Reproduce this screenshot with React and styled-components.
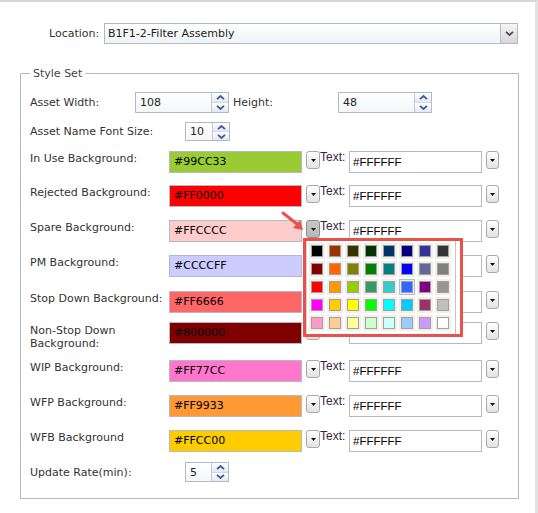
import React from 'react';
import styled, { createGlobalStyle } from 'styled-components';

const Global = createGlobalStyle`
  html, body { margin: 0; padding: 0; background: #fff; }
  body { font-family: "DejaVu Sans", Tahoma, sans-serif; font-size: 11px; color: #333; }
  * { box-sizing: border-box; }
`;

const Frame = styled.div`
  position: relative;
  width: 538px;
  height: 513px;
  border-top: 2px solid #d6d6d6;
  border-right: 3px solid #e2e2e2;
  overflow: hidden;
  background: #fff;
`;

const LocationRow = styled.div`
  display: flex;
  align-items: center;
  margin: 21px 0 0 49px;
  gap: 5px;
`;

const LocLabel = styled.span`
  width: 50px;
  white-space: nowrap;
  color: #333;
`;

const Select = styled.div`
  display: flex;
  width: 414px;
  height: 21px;
  border: 1px solid #b5b8c8;
  background: linear-gradient(#ffffff, #eef3f3);
`;

const SelectText = styled.div`
  flex: 1;
  padding-left: 3px;
  line-height: 19px;
  color: #222;
`;

const SelectButton = styled.div`
  width: 17px;
  border-left: 1px solid #b5b8c8;
  background: linear-gradient(#f6f6f6, #d6d6d6);
  display: flex;
  align-items: center;
  justify-content: center;
`;

const Group = styled.fieldset`
  margin: 23px 0 0 20px;
  width: 499px;
  height: 432px;
  border: 1px solid #b5b8c8;
  padding: 12px 9px 0 9px;
  display: flex;
  flex-direction: column;
`;

const Legend = styled.legend`
  padding: 0 3px;
  color: #444;
  line-height: 13px;
`;

const Row = styled.div`
  display: flex;
  align-items: flex-start;
  height: ${p => p.$h}px;
  flex-shrink: 0;
`;

const SpinLine = styled.div`
  display: flex;
  align-items: center;
`;

const Label = styled.div`
  width: ${p => p.$w}px;
  flex-shrink: 0;
  color: #333;
  line-height: 13px;
  padding-top: ${p => p.$pt || 0}px;
`;

const Spinner = styled.div`
  display: flex;
  width: ${p => p.$w}px;
  height: ${p => p.$h}px;
  border: 1px solid #b5b8c8;
  background: linear-gradient(#ffffff, #f4f6f8);
`;

const SpinValue = styled.div`
  flex: 1;
  padding-left: 4px;
  display: flex;
  align-items: center;
  color: #222;
`;

const SpinButtons = styled.div`
  width: 17px;
  border-left: 1px solid #c4c8d4;
  display: flex;
  flex-direction: column;
`;

const SpinHalf = styled.div`
  flex: 1;
  display: flex;
  align-items: center;
  justify-content: center;
  background: linear-gradient(#ffffff, #e4e8ee);
  & + & { border-top: 1px solid #d4d8e0; }
`;

const ColorField = styled.div`
  width: 133px;
  height: 22px;
  border: 1px solid #b5b8c8;
  background: ${p => p.$bg};
  padding-left: 4px;
  line-height: 20px;
  color: #000;
  flex-shrink: 0;
`;

const DropBtn = styled.div`
  width: ${p => p.$w}px;
  height: 18px;
  margin-left: 4px;
  flex-shrink: 0;
  border: 1px solid ${p => (p.$pressed ? '#8c8c8c' : '#a9a9a9')};
  border-radius: 3px;
  background: ${p => (p.$pressed ? 'linear-gradient(#c6c6c6, #b8b8b8)' : 'linear-gradient(#ffffff, #e2e2e2)')};
  display: flex;
  align-items: center;
  justify-content: center;
`;

const TextLabel = styled.div`
  width: 27px;
  margin-right: 2px;
  font-family: "Liberation Sans", Arial, sans-serif;
  font-size: 12px;
  line-height: 13px;
  color: #3c1f44;
  flex-shrink: 0;
`;

const TextInput = styled.div`
  width: 133px;
  height: 22px;
  border: 1px solid #b5b8c8;
  background: #fff;
  padding-left: 3px;
  line-height: 21px;
  font-family: "Liberation Sans", Arial, sans-serif;
  font-size: 11.5px;
  color: #000;
  flex-shrink: 0;
`;

const Annot = styled.div`
  position: absolute;
  left: 303px;
  top: 236px;
  width: 160px;
  height: 99px;
  border: 3px solid #e8524a;
  background: #fff;
`;

const Palette = styled.div`
  width: 150px;
  height: 93px;
  border-left: 1px solid #d4d4d4;
  border-right: 1px solid #c4c4c4;
  padding: 2px 4px 0 2px;
  display: grid;
  grid-template-columns: repeat(8, 16px);
  grid-auto-rows: 16px;
  gap: 2px;
  background: #fff;
`;

const Cell = styled.div`
  display: flex;
  align-items: center;
  justify-content: center;
  background: ${p => (p.$sel ? '#e2ecfa' : '#efefef')};
  border: 1px solid ${p => (p.$sel ? '#9ec0ec' : 'transparent')};
`;

const Swatch = styled.div`
  width: 12px;
  height: 12px;
  border: 1px solid #a7a091;
  background: ${p => p.$c};
`;

const Arrow = styled.svg`
  position: absolute;
  left: 280px;
  top: 207px;
`;

const Chevron = ({ up, color = '#3a5ba0' }) => (
  <svg width="9" height="5" viewBox="0 0 9 5">
    <path d={up ? 'M1 4.2 L4.5 1 L8 4.2' : 'M1 0.8 L4.5 4 L8 0.8'} fill="none" stroke={color} strokeWidth="1.8" />
  </svg>
);

const Tri = () => (
  <svg width="5" height="3" viewBox="0 0 5 3">
    <polygon points="0,0 5,0 2.5,3" fill="#111" />
  </svg>
);

const Spin = ({ value, w, h }) => (
  <Spinner $w={w} $h={h}>
    <SpinValue>{value}</SpinValue>
    <SpinButtons>
      <SpinHalf><Chevron up /></SpinHalf>
      <SpinHalf><Chevron /></SpinHalf>
    </SpinButtons>
  </Spinner>
);

const rows = [
  { label: 'In Use Background:', color: '#99CC33', h: 34 },
  { label: 'Rejected Background:', color: '#FF0000', h: 35 },
  { label: 'Spare Background:', color: '#FFCCCC', h: 35, pressed: true },
  { label: 'PM Background:', color: '#CCCCFF', h: 36 },
  { label: 'Stop Down Background:', color: '#FF6666', h: 31 },
  { label: 'Non-Stop Down Background:', color: '#800000', h: 38, pt: 2 },
  { label: 'WIP Background:', color: '#FF77CC', h: 35 },
  { label: 'WFP Background:', color: '#FF9933', h: 35 },
  { label: 'WFB Background', color: '#FFCC00', h: 32 },
];

const palette = [
  '#000000', '#993300', '#333300', '#003300', '#003366', '#000080', '#333399', '#333333',
  '#800000', '#FF6600', '#808000', '#008000', '#008080', '#0000FF', '#666699', '#808080',
  '#FF0000', '#FF9900', '#99CC00', '#339966', '#33CCCC', '#3366FF', '#800080', '#969696',
  '#FF00FF', '#FFCC00', '#FFFF00', '#00FF00', '#00FFFF', '#00CCFF', '#993366', '#C0C0C0',
  '#FF99CC', '#FFCC99', '#FFFF99', '#CCFFCC', '#CCFFFF', '#99CCFF', '#CC99FF', '#FFFFFF',
];

export default function App() {
  return (
    <>
      <Global />
      <Frame>
        <LocationRow>
          <LocLabel>Location:</LocLabel>
          <Select>
            <SelectText>B1F1-2-Filter Assembly</SelectText>
            <SelectButton><Chevron color="#4a4a4a" /></SelectButton>
          </Select>
        </LocationRow>

        <Group>
          <Legend>Style Set</Legend>
          <Row $h={30}>
            <SpinLine>
              <Label $w={105}>Asset Width:</Label>
              <Spin value="108" w={94} h={21} />
              <Label $w={105} style={{ marginLeft: 4 }}>Height:</Label>
              <Spin value="48" w={94} h={21} />
            </SpinLine>
          </Row>
          <Row $h={29}>
            <SpinLine>
              <Label $w={155}>Asset Name Font Size:</Label>
              <Spin value="10" w={45} h={19} />
            </SpinLine>
          </Row>
          {rows.map(r => (
            <Row key={r.label} $h={r.h}>
              <Label $w={139} $pt={r.pt || 1}>{r.label}</Label>
              <ColorField $bg={r.color}>{r.color}</ColorField>
              <DropBtn $w={14} $pressed={r.pressed}><Tri /></DropBtn>
              <TextLabel>Text:</TextLabel>
              <TextInput>#FFFFFF</TextInput>
              <DropBtn $w={13}><Tri /></DropBtn>
            </Row>
          ))}
          <Row $h={20}>
            <SpinLine>
              <Label $w={155}>Update Rate(min):</Label>
              <Spin value="5" w={44} h={20} />
            </SpinLine>
          </Row>
        </Group>

        <Arrow width="26" height="24" viewBox="0 0 26 24">
          <line x1="3" y1="4" x2="17" y2="15" stroke="#e8524a" strokeWidth="3" strokeLinecap="round" />
          <polygon points="13,19 23,21 20,11" fill="#e8524a" />
        </Arrow>

        <Annot>
          <Palette>
            {palette.map((c, i) => (
              <Cell key={i} $sel={i === 21}>
                <Swatch $c={c} />
              </Cell>
            ))}
          </Palette>
        </Annot>
      </Frame>
    </>
  );
}
